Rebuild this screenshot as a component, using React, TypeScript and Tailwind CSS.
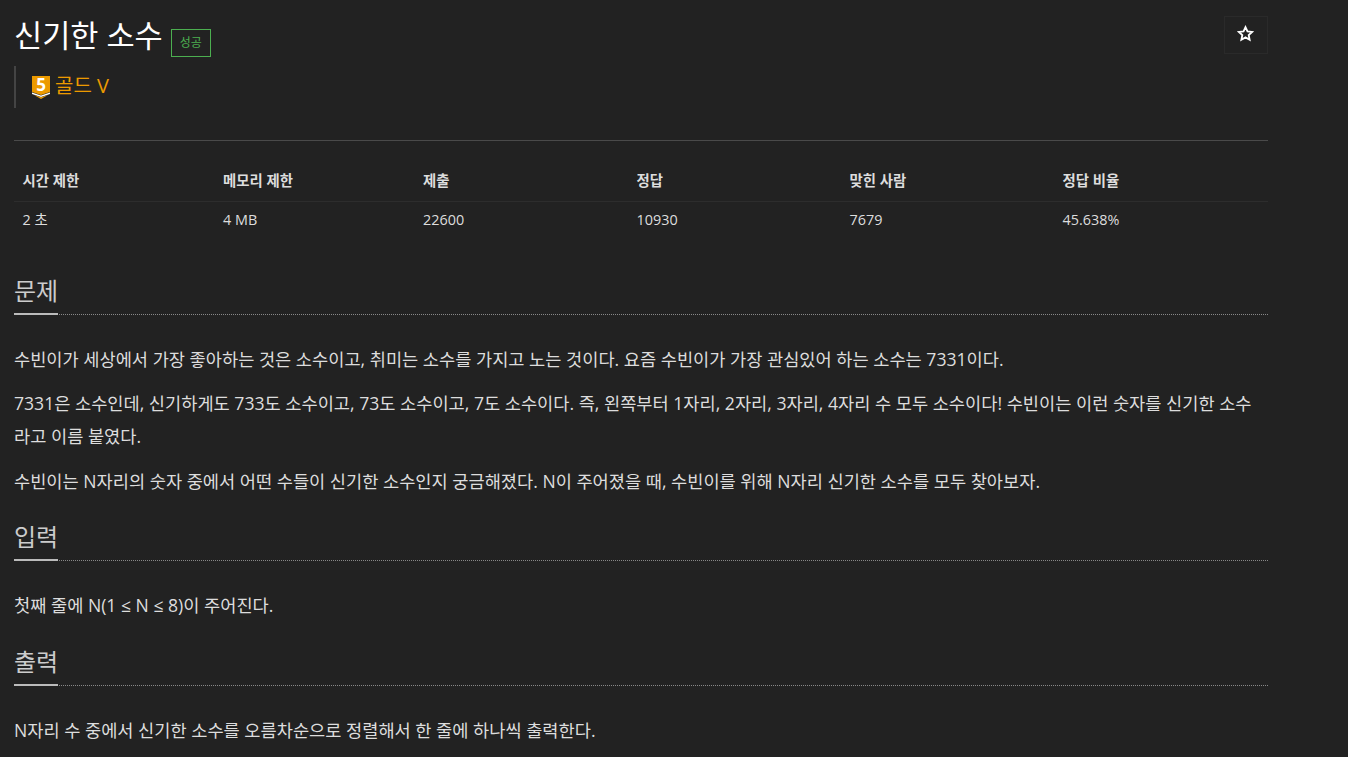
const font = "font-['Open_Sans','Noto_Sans_CJK_KR',sans-serif]";

const columns = [
  { head: '시간 제한', value: '2 초', width: 'w-[200.5px]' },
  { head: '메모리 제한', value: '4 MB', width: 'w-[200px]' },
  { head: '제출', value: '22600', width: 'w-[213.5px]' },
  { head: '정답', value: '10930', width: 'w-[213px]' },
  { head: '맞힌 사람', value: '7679', width: 'w-[213px]' },
  { head: '정답 비율', value: '45.638%', width: 'flex-1' },
];

const Heading = ({ children }: { children: string }) => (
  <div className="border-b border-dotted border-[#888] h-[42px] relative">
    <h2 className="text-[24px] leading-[36px] text-[#ccc] w-fit">{children}</h2>
    <div className="absolute left-0 top-[40px] w-[44px] h-[2px] bg-[#bbb]" />
  </div>
);

const App = () => {
  return (
    <div className={`${font} bg-[#222222] w-full h-[757px] overflow-hidden text-[#ddd]`}>
      <div className="w-[1254px] ml-[14px]">
        <div className="flex items-start justify-between h-[66px]">
          <div className="flex items-start pt-[14px]">
            <h1 className="text-[30.6px] leading-[42px] text-white font-normal">신기한 소수</h1>
            <span className="ml-[8px] mt-[15px] w-[40px] h-[28px] border border-[#4caf50] text-[#4caf50] text-[12px] flex items-center justify-center">성공</span>
          </div>
          <div className="mt-[16px] w-[44px] h-[38px] border border-[#2a2a2a] flex items-center justify-center pb-[3px] pr-[2px]">
            <svg width="17" height="17" viewBox="0 0 24 24" fill="none" stroke="#fff" strokeWidth="2.6">
              <path d="M12 3l2.8 6 6.6.8-4.9 4.5 1.3 6.5L12 17.5 6.2 20.8l1.3-6.5L2.6 9.8 9.2 9z" />
            </svg>
          </div>
        </div>
        <div className="border-l-[2px] border-[#444] h-[42px] pl-[16px] flex items-center gap-[5px]">
          <svg width="18" height="23" viewBox="0 0 18 23" className="mt-[1px] overflow-visible">
            <path d="M0 0h18v16l-9 3-9-3z" fill="#ec9a00" />
            <path d="M0 16.5l9 3 9-3V18l-9 3-9-3z" fill="#fff" />
            <path d="M2 19l7 2.3 7-2.3-7 4z" fill="#ec9a00" />
            <text x="9" y="15" textAnchor="middle" fontSize="17" fontWeight="700" fill="#fff" fontFamily="Open Sans">5</text>
          </svg>
          <span className="text-[20px] leading-[28px] text-[#ec9a00] -mt-[2px]">골드 V</span>
        </div>
        <div className="mt-[32px] border-t border-[#4a4a4a]" />
        <div className="flex mt-[20px] border-b border-[#2d2d2d] h-[41px] text-[14.4px] font-bold text-[#ddd]">
          {columns.map((c) => (
            <div key={c.head} className={`${c.width} px-[8.5px] leading-[39px]`}>{c.head}</div>
          ))}
        </div>
        <div className="flex h-[38px] text-[14.4px] text-[#ddd]">
          {columns.map((c) => (
            <div key={c.head} className={`${c.width} px-[8.5px] leading-[36px]`}>{c.value}</div>
          ))}
        </div>
        <div className="mt-[33px]">
          <Heading>문제</Heading>
          <div className="mt-[28px] text-[17.6px] leading-[33.44px] text-[#ddd] flex flex-col gap-[10.2px] pr-[3px]">
            <p>수빈이가 세상에서 가장 좋아하는 것은 소수이고, 취미는 소수를 가지고 노는 것이다. 요즘 수빈이가 가장 관심있어 하는 소수는 7331이다.</p>
            <p>7331은 소수인데, 신기하게도 733도 소수이고, 73도 소수이고, 7도 소수이다. 즉, 왼쪽부터 1자리, 2자리, 3자리, 4자리 수 모두 소수이다! 수빈이는 이런 숫자를 신기한 소수라고 이름 붙였다.</p>
            <p className="mt-[1px]">수빈이는 N자리의 숫자 중에서 어떤 수들이 신기한 소수인지 궁금해졌다. N이 주어졌을 때, 수빈이를 위해 N자리 신기한 소수를 모두 찾아보자.</p>
          </div>
        </div>
        <div className="mt-[20.6px]">
          <Heading>입력</Heading>
          <p className="mt-[28px] text-[17.6px] leading-[33.44px]">첫째 줄에 N(1 ≤ N ≤ 8)이 주어진다.</p>
        </div>
        <div className="mt-[21.5px]">
          <Heading>출력</Heading>
          <p className="mt-[28px] text-[17.6px] leading-[33.44px]">N자리 수 중에서 신기한 소수를 오름차순으로 정렬해서 한 줄에 하나씩 출력한다.</p>
        </div>
      </div>
    </div>
  );
};

export default App;
